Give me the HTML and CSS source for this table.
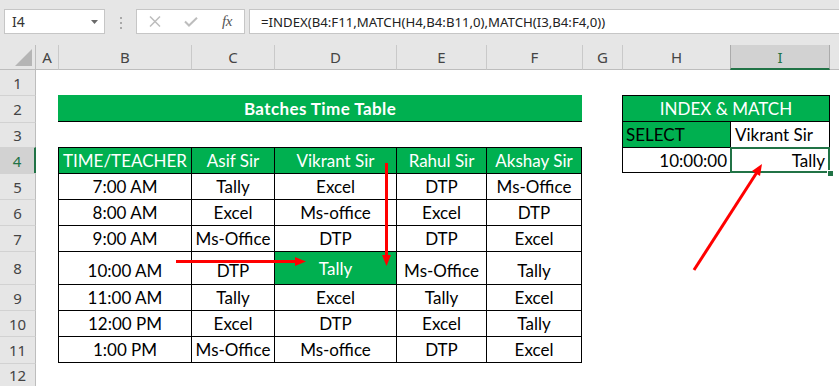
FILE: index.html
```html
<!DOCTYPE html>
<html>
<head>
<meta charset="utf-8">
<link rel="stylesheet" href="styles.css">
</head>
<body>
<div class="app">
  <div class="fbar">
    <div class="namebox"><span>I4</span><svg width="7" height="4" viewBox="0 0 7 4"><polygon points="0,0 7,0 3.5,4" fill="#6a6a6a"/></svg></div>
    <svg class="dots" width="3" height="12" viewBox="0 0 3 12"><rect x="0" y="0" width="2" height="2" fill="#a8a8a8"/><rect x="0" y="5" width="2" height="2" fill="#a8a8a8"/><rect x="0" y="10" width="2" height="2" fill="#a8a8a8"/></svg>
    <div class="fxbox">
      <svg width="12" height="11" viewBox="0 0 12 11"><path d="M1 0.5 L11 10.5 M11 0.5 L1 10.5" stroke="#bdbdbd" stroke-width="1.5" fill="none"/></svg>
      <svg width="14" height="10" viewBox="0 0 14 10"><path d="M1 4.5 L5 8.5 L13 0.8" stroke="#bdbdbd" stroke-width="2" fill="none"/></svg>
      <span class="fx">fx</span>
    </div>
    <div class="finput">=INDEX(B4:F11,MATCH(H4,B4:B11,0),MATCH(I3,B4:F4,0))</div>
  </div>

  <div class="sheet">
    <!-- column headers -->
    <div class="corner"><svg width="36" height="24" viewBox="0 0 36 24"><polygon points="32,4 32,21 15,21" fill="#b5b5b5"/></svg></div>
    <div class="ch nl">A</div>
    <div class="ch">B</div>
    <div class="ch">C</div>
    <div class="ch">D</div>
    <div class="ch">E</div>
    <div class="ch">F</div>
    <div class="ch">G</div>
    <div class="ch">H</div>
    <div class="ch sel">I</div>
    <div class="ch nl"></div>

    <!-- row 1 -->
    <div class="rh r1">1</div>
    <div class="sp10"></div>

    <!-- row 2 -->
    <div class="rh">2</div>
    <div></div>
    <div class="title">Batches Time Table</div>
    <div></div>
    <div class="im">INDEX &amp; MATCH</div>
    <div></div>

    <!-- row 3 -->
    <div class="rh">3</div>
    <div></div>
    <div class="sp5"></div>
    <div></div>
    <div class="sel-lbl">SELECT</div>
    <div class="sel-val">Vikrant Sir</div>
    <div></div>

    <!-- row 4 -->
    <div class="rh sel">4</div>
    <div></div>
    <div class="t hd">TIME/TEACHER</div>
    <div class="t hd">Asif Sir</div>
    <div class="t hd">Vikrant Sir</div>
    <div class="t hd">Rahul Sir</div>
    <div class="t hd r">Akshay Sir</div>
    <div></div>
    <div class="res-time">10:00:00</div>
    <div class="res-val">Tally<span class="selbox"></span><span class="handle"></span></div>
    <div></div>

    <!-- row 5 -->
    <div class="rh">5</div>
    <div></div>
    <div class="t">7:00 AM</div>
    <div class="t">Tally</div>
    <div class="t">Excel</div>
    <div class="t">DTP</div>
    <div class="t r">Ms-Office</div>
    <div class="sp4"></div>

    <!-- row 6 -->
    <div class="rh">6</div>
    <div></div>
    <div class="t">8:00 AM</div>
    <div class="t">Excel</div>
    <div class="t">Ms-office</div>
    <div class="t">Excel</div>
    <div class="t r">DTP</div>
    <div class="sp4"></div>

    <!-- row 7 -->
    <div class="rh">7</div>
    <div></div>
    <div class="t">9:00 AM</div>
    <div class="t">Ms-Office</div>
    <div class="t">DTP</div>
    <div class="t">DTP</div>
    <div class="t r">Excel</div>
    <div class="sp4"></div>

    <!-- row 8 -->
    <div class="rh">8</div>
    <div></div>
    <div class="t bt">10:00 AM</div>
    <div class="t bt">DTP</div>
    <div class="t hl">Tally</div>
    <div class="t bt">Ms-Office</div>
    <div class="t bt r">Tally</div>
    <div class="sp4"></div>

    <!-- row 9 -->
    <div class="rh">9</div>
    <div></div>
    <div class="t">11:00 AM</div>
    <div class="t">Tally</div>
    <div class="t">Excel</div>
    <div class="t">Tally</div>
    <div class="t r">Excel</div>
    <div class="sp4"></div>

    <!-- row 10 -->
    <div class="rh">10</div>
    <div></div>
    <div class="t">12:00 PM</div>
    <div class="t">Excel</div>
    <div class="t">DTP</div>
    <div class="t">Excel</div>
    <div class="t r">Tally</div>
    <div class="sp4"></div>

    <!-- row 11 -->
    <div class="rh">11</div>
    <div></div>
    <div class="t b">1:00 PM</div>
    <div class="t b">Ms-Office</div>
    <div class="t b">Ms-office</div>
    <div class="t b">DTP</div>
    <div class="t b r">Excel</div>
    <div class="sp4"></div>

    <!-- row 12 -->
    <div class="rh">12</div>
    <div class="sp10"></div>
  </div>

  <svg class="arrows" width="839" height="386" viewBox="0 0 839 386">
    <g fill="#ff0000" stroke="#ff0000">
      <line x1="386.5" y1="163" x2="386.5" y2="257" stroke-width="3"/>
      <polygon points="382,255 391,255 386.5,266" stroke="none"/>
      <line x1="176" y1="261.5" x2="297" y2="261.5" stroke-width="3"/>
      <polygon points="295,257 295,266 306,261.5" stroke="none"/>
      <line x1="694" y1="270" x2="756.5" y2="173" stroke-width="3"/>
      <polygon points="762,164 760,176 752,171" stroke="none"/>
    </g>
  </svg>
</div>
</body>
</html>
```

FILE: styles.css
```css
body {
  margin: 0;
  background: #ffffff;
  font-family: Lato, "Noto Sans", sans-serif;
}

.app {
  position: relative;
  width: 839px;
  height: 386px;
  overflow: hidden;
  background: #ffffff;
}

/* ---------- formula bar ---------- */
.fbar {
  height: 45px;
  box-sizing: border-box;
  padding-top: 9px;
  background: #e6e6e6;
  display: flex;
  align-items: flex-start;
}

.namebox {
  margin-left: 4px;
  width: 101px;
  height: 25px;
  box-sizing: border-box;
  background: #ffffff;
  border: 1px solid #c6c6c6;
  display: flex;
  align-items: center;
  justify-content: space-between;
  padding: 0 6px 0 7px;
  font: 14px "Noto Sans", sans-serif;
  color: #333333;
}

.dots {
  margin-left: 15px;
  margin-top: 8px;
}

.fxbox {
  margin-left: 13px;
  width: 109px;
  height: 25px;
  box-sizing: border-box;
  background: #ffffff;
  border: 1px solid #c6c6c6;
  display: grid;
  grid-template-columns: 36px 36px 36px;
  align-items: center;
  justify-items: center;
}

.fx {
  font: italic 15px "Liberation Serif", serif;
  color: #555555;
  letter-spacing: -0.5px;
}

.finput {
  margin-left: 4px;
  flex: 1;
  height: 25px;
  box-sizing: border-box;
  background: #ffffff;
  border: 1px solid #c6c6c6;
  border-right: none;
  padding-left: 11px;
  display: flex;
  align-items: center;
  font: 13.2px "Noto Sans", sans-serif;
  color: #222222;
  white-space: nowrap;
}

/* ---------- sheet grid ---------- */
.sheet {
  display: grid;
  grid-template-columns: 36px 22px 133px 83px 122px 90px 96px 40px 108px 100px 1fr;
  grid-template-rows: 25px 25px 27px 25px 26px 26px 26px 26px 33px 26px 26px 27px 1fr;
  height: 341px;
  font-size: 17px;
  color: #000000;
}

.sheet > div {
  box-sizing: border-box;
  min-width: 0;
  white-space: nowrap;
}

.corner {
  background: #e6e6e6;
  border-bottom: 1px solid #bdbdbd;
  border-right: 1px solid #bdbdbd;
}
.corner svg { display: block; }

.ch {
  background: #e6e6e6;
  border-bottom: 1px solid #bdbdbd;
  border-left: 1px solid #c9c9c9;
  display: flex;
  align-items: center;
  justify-content: center;
  font: 15px "Noto Sans", sans-serif;
  color: #444444;
}
.ch.nl { border-left: none; }
.ch.sel {
  background: #d2d2d2;
  border-left-color: #ababab;
  border-right: 1px solid #ababab;
  border-bottom: 2px solid #217346;
  color: #217346;
}

.rh {
  background: #e6e6e6;
  border-right: 1px solid #bdbdbd;
  border-top: 1px solid #d2d2d2;
  display: flex;
  align-items: center;
  justify-content: center;
  font: 15px "Noto Sans", sans-serif;
  color: #444444;
}
.rh.r1 { border-top: none; }
.rh.sel {
  background: #d2d2d2;
  border-right: 2px solid #217346;
  color: #217346;
}

.sp10 { grid-column: span 10; }
.sp5 { grid-column: span 5; }
.sp4 { grid-column: span 4; }

/* title bar */
.title {
  grid-column: span 5;
  background: #00b050;
  color: #ffffff;
  font-weight: 700;
  letter-spacing: 0.4px;
  border-bottom: 1px solid #000000;
  display: flex;
  align-items: center;
  justify-content: center;
}

/* main table */
.t {
  border-left: 1px solid #000000;
  border-top: 1px solid #000000;
  display: flex;
  align-items: center;
  justify-content: center;
}
.t.r { border-right: 1px solid #000000; }
.t.b { border-bottom: 1px solid #000000; }
.t.bt { align-items: flex-end; padding-bottom: 3px; }
.t.hd, .t.hl {
  background: #00b050;
  color: #ffffff;
}

/* INDEX & MATCH table */
.im {
  grid-column: span 2;
  background: #00b050;
  color: #ffffff;
  border: 1px solid #000000;
  display: flex;
  align-items: center;
  justify-content: center;
}
.sel-lbl {
  background: #00b050;
  border-left: 1px solid #000000;
  display: flex;
  align-items: center;
  padding-left: 3px;
}
.sel-val {
  border-left: 1px solid #000000;
  border-right: 1px solid #000000;
  display: flex;
  align-items: center;
  padding-left: 4px;
}
.res-time {
  border: 1px solid #000000;
  border-right: none;
  display: flex;
  align-items: center;
  justify-content: flex-end;
  padding-right: 3px;
}
.res-val {
  position: relative;
  border: 1px solid #000000;
  display: flex;
  align-items: center;
  justify-content: flex-end;
  padding-right: 4px;
}
.selbox {
  position: absolute;
  left: -1px;
  top: -1px;
  right: -1px;
  bottom: -1px;
  border: 2px solid #217346;
}
.handle {
  position: absolute;
  right: -5px;
  bottom: -5px;
  width: 5px;
  height: 5px;
  background: #217346;
  border: 1px solid #ffffff;
}

.arrows {
  position: absolute;
  left: 0;
  top: 0;
  pointer-events: none;
}
```
